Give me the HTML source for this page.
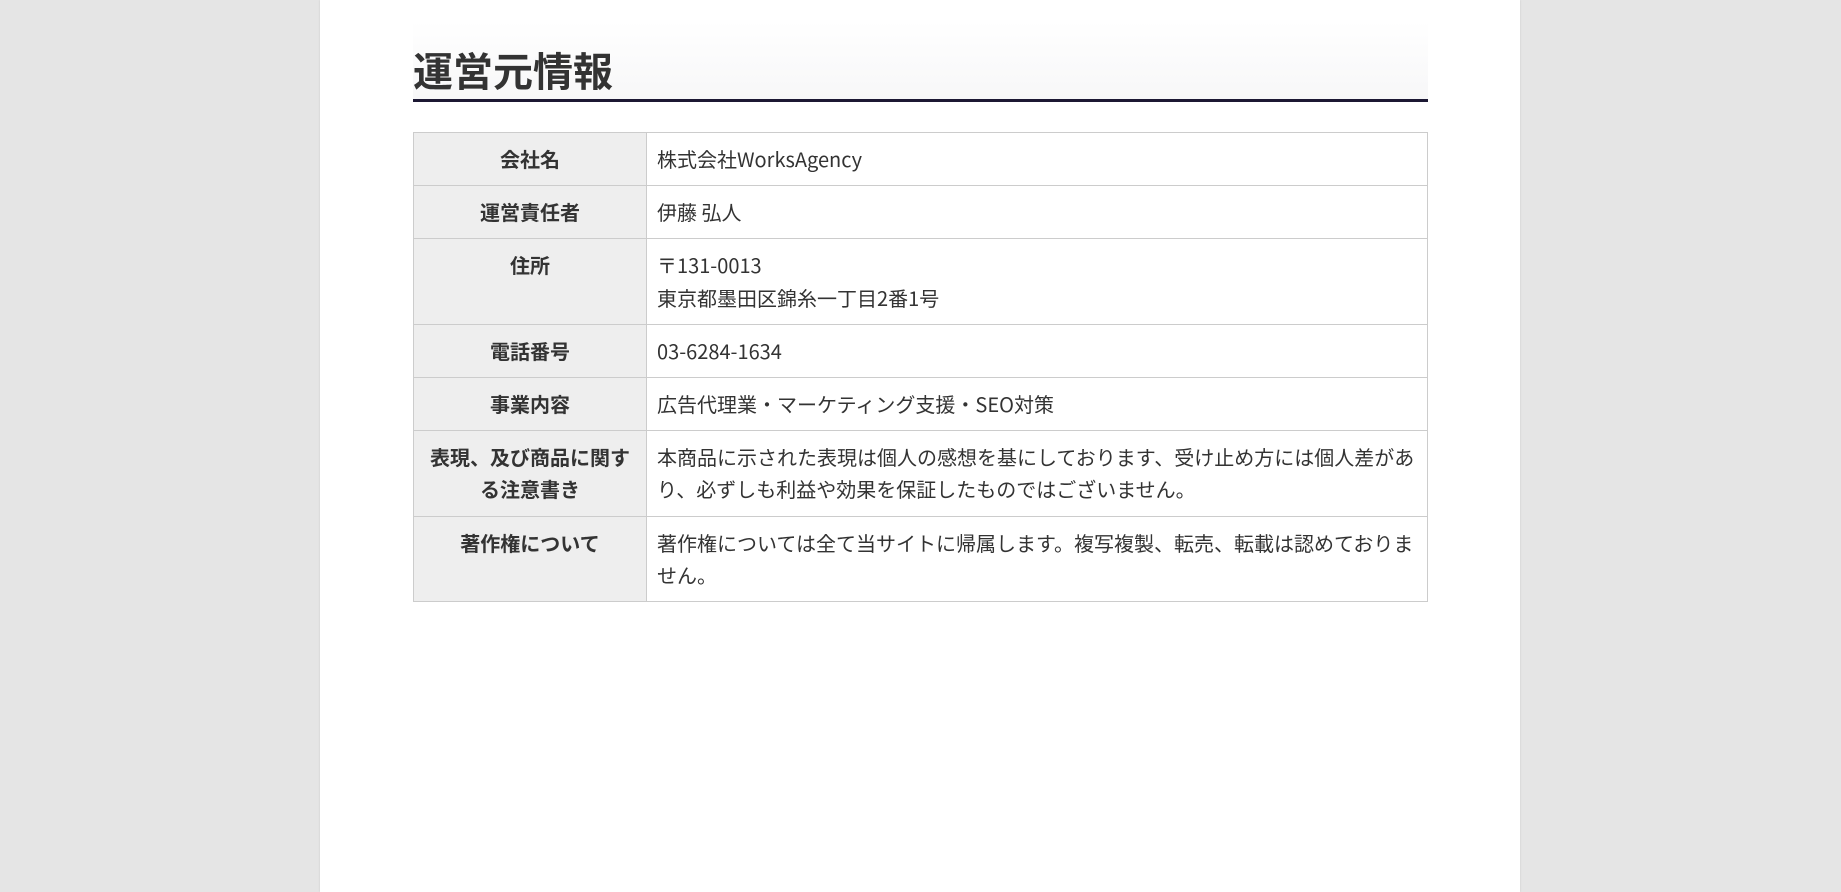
<!DOCTYPE html>
<html lang="ja"><head><meta charset="utf-8">
<style>
html,body{margin:0;padding:0;}
body{width:1841px;height:892px;background:#e5e5e5;overflow:hidden;font-family:"Noto Sans CJK JP","Liberation Sans",sans-serif;color:#333;}
.panel{position:absolute;left:320px;top:0;width:1200px;height:892px;background:#fff;box-shadow:0 0 2px rgba(0,0,0,.12);}
.h{position:absolute;left:93px;top:21px;width:1015px;height:78px;border-bottom:3px solid #1c1833;
background:linear-gradient(to bottom,#fff 0%,#f7f7f8 100%);}
.h span{position:absolute;left:0;bottom:10px;font-size:40px;font-weight:bold;color:#333;line-height:1;}
table{position:absolute;left:93px;top:132px;width:1015px;border-collapse:collapse;font-size:20px;}
td,th{border:1px solid #ccc;padding:10px 10px;line-height:32.2px;vertical-align:top;text-align:left;}
th{background:#eee;width:212px;font-weight:bold;text-align:center;}
</style></head><body>
<div class="panel">
<div class="h"><span>運営元情報</span></div>
<table>
<tr><th>会社名</th><td>株式会社WorksAgency</td></tr>
<tr><th>運営責任者</th><td>伊藤 弘人</td></tr>
<tr><th>住所</th><td>〒131-0013<br>東京都墨田区錦糸一丁目2番1号</td></tr>
<tr><th>電話番号</th><td>03-6284-1634</td></tr>
<tr><th>事業内容</th><td>広告代理業・マーケティング支援・SEO対策</td></tr>
<tr><th>表現、及び商品に関する注意書き</th><td>本商品に示された表現は個人の感想を基にしております、受け止め方には個人差があり、必ずしも利益や効果を保証したものではございません。</td></tr>
<tr><th>著作権について</th><td>著作権については全て当サイトに帰属します。複写複製、転売、転載は認めておりません。</td></tr>
</table>
</div>
</body></html>
